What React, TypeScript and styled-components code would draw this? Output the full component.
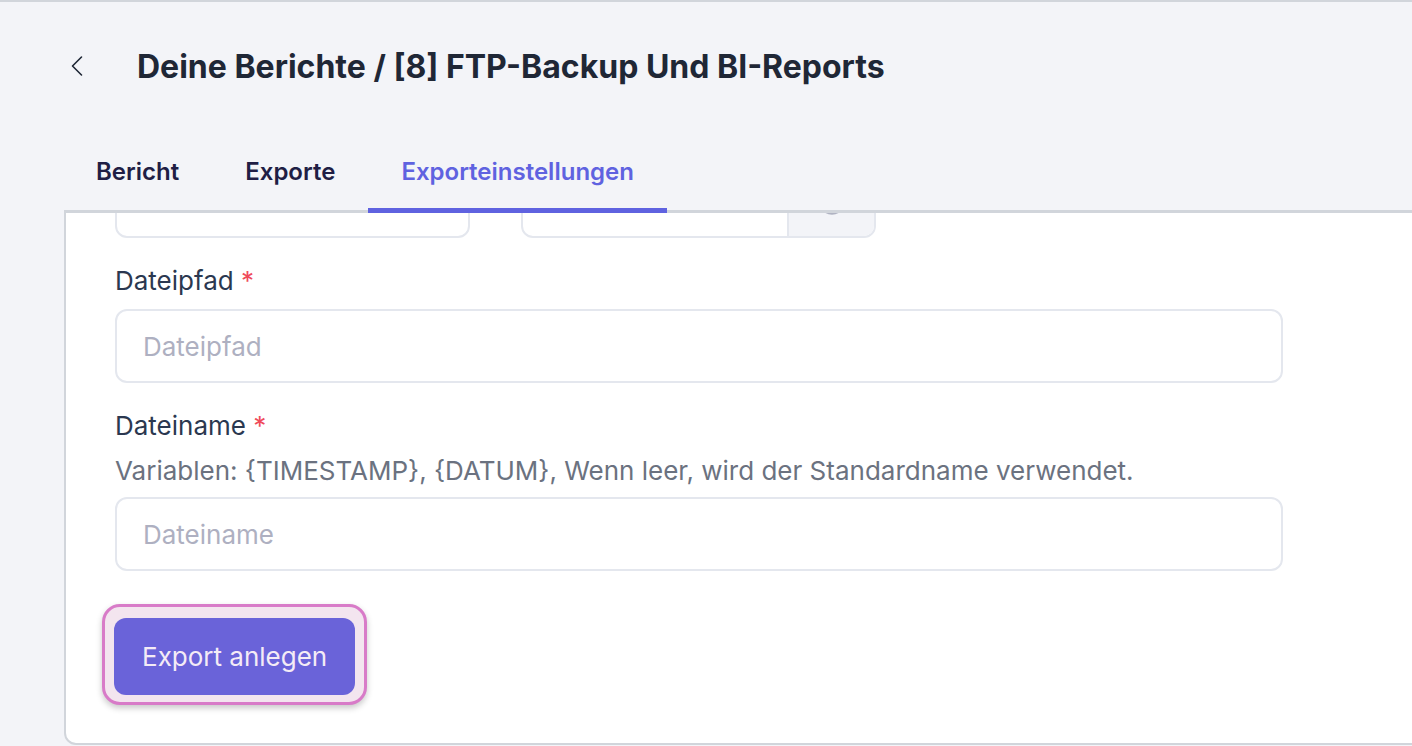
import React, { useLayoutEffect, useRef } from "react";
import styled, { createGlobalStyle } from "styled-components";
import { Clock } from "lucide-react";

const GlobalStyle = createGlobalStyle`
    html, body {
        margin: 0;
        padding: 0;
        background: #f3f4f8;
        font-family: Inter, "Noto Sans", "Liberation Sans", sans-serif;
        overflow: hidden;
    }
    * {
        box-sizing: border-box;
    }
`;

const Page = styled.div`
    height: 100vh;
    display: flex;
    flex-direction: column;
    border-top: 2px solid #d1d5db;
    overflow: hidden;
`;

const Header = styled.div`
    height: 128px;
    flex-shrink: 0;
    display: flex;
    align-items: center;
    padding-left: 70px;
    gap: 53px;
`;

const BackBtn = styled.div`
    width: 14px;
    height: 22px;
    display: flex;
    cursor: pointer;
`;

const Title = styled.h1`
    margin: 0;
    font-size: 32px;
    font-weight: 700;
    color: #1f2736;
`;

const TabBar = styled.div`
    display: flex;
    height: 83px;
    padding-left: 63px;
    margin-bottom: -3px;
    position: relative;
    z-index: 1;
    flex-shrink: 0;
`;

const Tab = styled.div<{ $active?: boolean }>`
    display: flex;
    align-items: center;
    padding: 5px 33px 0 33px;
    font-size: 24px;
    font-weight: 600;
    color: ${(p) => (p.$active ? "#5f62e0" : "#1f1e45")};
    border-bottom: 5px solid ${(p) => (p.$active ? "#5f62e0" : "transparent")};
    cursor: pointer;
`;

const Panel = styled.div`
    flex: 1;
    margin: 0 -40px 1px 64px;
    background: #fff;
    border: 2px solid #d1d5db;
    border-top-width: 3px;
    border-radius: 0 0 12px 12px;
    overflow: hidden;
    display: flex;
    min-height: 0;
`;

const ScrollArea = styled.div`
    flex: 1;
    overflow-y: auto;
    scrollbar-width: none;
    padding: 40px 0 80px 49px;
    &::-webkit-scrollbar {
        display: none;
    }
`;

const Row = styled.div`
    display: flex;
    gap: 51px;
`;

const Box = styled.div<{ $width?: number }>`
    width: ${(p) => (p.$width ? `${p.$width}px` : "100%")};
    max-width: 1168px;
    height: 74px;
    border: 2px solid #e4e7ee;
    border-radius: 12px;
    display: flex;
    overflow: hidden;
    background: #fff;
`;

const Addon = styled.div`
    width: 87px;
    background: #f3f4f8;
    border-left: 2px solid #e4e7ee;
    display: flex;
    align-items: center;
    justify-content: center;
    color: #b0b3c2;
`;

const Field = styled.div`
    margin-top: 25px;
    display: flex;
    flex-direction: column;
`;

const Label = styled.label`
    font-size: 26px;
    line-height: 36px;
    color: #2b3850;
    margin-bottom: 10px;
`;

const Star = styled.span`
    color: #ef4b5b;
`;

const Help = styled.div`
    font-size: 26px;
    line-height: 36px;
    color: #6b7280;
    margin: -1px 0 8px 0;
`;

const TextInput = styled.input`
    flex: 1;
    min-width: 0;
    border: none;
    outline: none;
    background: transparent;
    padding: 0 26px;
    font-family: inherit;
    font-size: 26px;
    color: #1f2736;
    &::placeholder {
        color: #aeb0c1;
    }
`;

const FocusFrame = styled.div`
    display: inline-flex;
    align-self: flex-start;
    margin: 33px 0 0 -13px;
    padding: 11px 9px 7px 9px;
    border: 3px solid #d87bc8;
    background: #f3e5ef;
    border-radius: 18px;
    box-shadow: 0 3px 6px rgba(0, 0, 0, 0.22);
`;

const PrimaryBtn = styled.button`
    height: 77px;
    padding: 0 28px;
    border: none;
    border-radius: 12px;
    background: #6a63d9;
    color: #f4ebf6;
    font-family: inherit;
    font-size: 26px;
    cursor: pointer;
`;

const Form = styled.div`
    display: flex;
    flex-direction: column;
`;

const App = () => {
    const scrollRef = useRef<HTMLDivElement>(null);

    // the form is shown scrolled down a bit, like in the screenshot
    useLayoutEffect(() => {
        if (scrollRef.current) scrollRef.current.scrollTop = 89;
    }, []);

    return (
        <>
            <GlobalStyle />
            <Page>
                <Header>
                    <BackBtn>
                        <svg width="14" height="22" viewBox="0 0 14 22" fill="none">
                            <path d="M11.5 2 L2.5 11 L11.5 20" stroke="#1f2736" strokeWidth="1.6" strokeLinecap="round" strokeLinejoin="round" />
                        </svg>
                    </BackBtn>
                    <Title>Deine Berichte / [8] FTP-Backup Und BI-Reports</Title>
                </Header>
                <TabBar>
                    <Tab>Bericht</Tab>
                    <Tab>Exporte</Tab>
                    <Tab $active>Exporteinstellungen</Tab>
                </TabBar>
                <Panel>
                    <ScrollArea ref={scrollRef}>
                        <Form>
                            <Row>
                                <Box $width={355}>
                                    <TextInput />
                                </Box>
                                <Box $width={355}>
                                    <TextInput />
                                    <Addon>
                                        <Clock size={30} strokeWidth={1.8} />
                                    </Addon>
                                </Box>
                            </Row>
                            <Field>
                                <Label>
                                    Dateipfad <Star>*</Star>
                                </Label>
                                <Box>
                                    <TextInput placeholder="Dateipfad" />
                                </Box>
                            </Field>
                            <Field>
                                <Label>
                                    Dateiname <Star>*</Star>
                                </Label>
                                <Help>Variablen: {"{TIMESTAMP}"}, {"{DATUM}"}, Wenn leer, wird der Standardname verwendet.</Help>
                                <Box>
                                    <TextInput placeholder="Dateiname" />
                                </Box>
                            </Field>
                            <FocusFrame>
                                <PrimaryBtn>Export anlegen</PrimaryBtn>
                            </FocusFrame>
                        </Form>
                    </ScrollArea>
                </Panel>
            </Page>
        </>
    );
};

export default App;
